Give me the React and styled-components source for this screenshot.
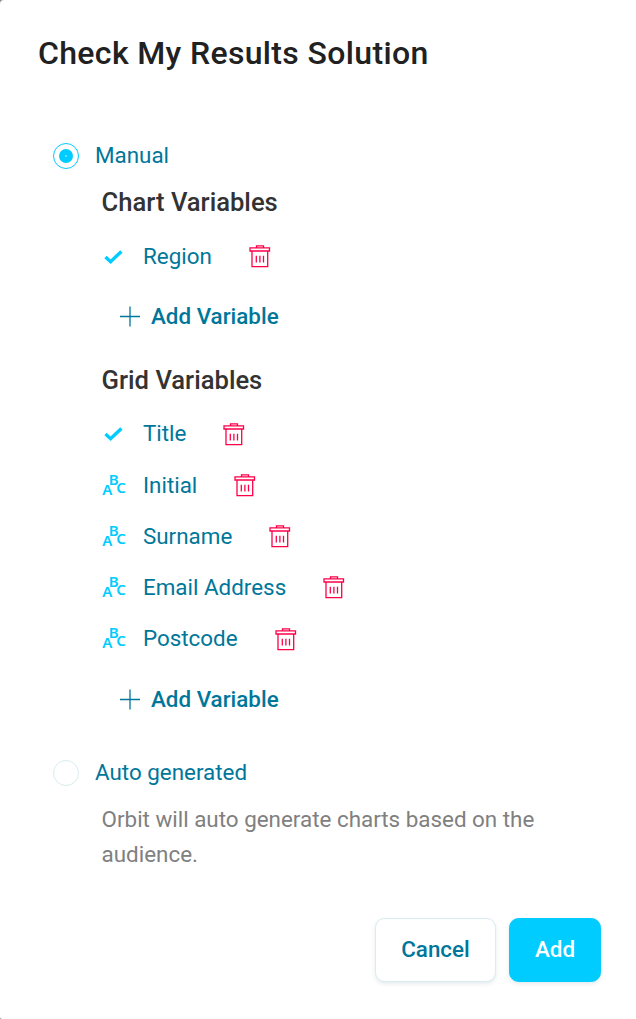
import React from "react";
import styled, { createGlobalStyle } from "styled-components";

const GlobalStyle = createGlobalStyle`
  *, *::before, *::after { box-sizing: border-box; }
  html { background: #8a8a8a; }
  body { margin: 0; }
  button { font: inherit; letter-spacing: inherit; cursor: pointer; }
`;

const Dialog = styled.main`
  width: 100%;
  height: 1019px;
  padding: 34px 35px 0 38px;
  background: #fff;
  border-radius: 4px 0 0 2px;
  font-family: Roboto, "Liberation Sans", sans-serif;
  font-size: 22.4px;
  color: #00779a;
`;

const Title = styled.h1`
  margin: 0 0 63.1px;
  font-size: 32px;
  line-height: 39px;
  font-weight: 500;
  letter-spacing: 0.35px;
  color: #212121;
`;

const Option = styled.label`
  display: flex;
  align-items: center;
  gap: 16px;
  height: 40px;
  padding-left: 15px;
  line-height: 26px;
`;

const OptionText = styled.span`
  margin-bottom: 2px;
`;

const Radio = styled.span`
  display: grid;
  place-items: center;
  width: 26px;
  height: 26px;
  border: 1px solid ${(p) => (p.$checked ? "#00ccff" : "#d9ecef")};
  border-radius: 50%;
`;

const RadioDot = styled.span`
  width: 14px;
  height: 14px;
  border-radius: 50%;
  background: radial-gradient(circle, #5ddfff 0 1px, #00ccff 1.5px);
`;

const Section = styled.section`
  padding-left: 63.6px;
  margin-bottom: ${(p) => p.$gap}px;
`;

const Heading = styled.h2`
  margin: 0 0 2.05px;
  font-size: 25.6px;
  line-height: 52px;
  font-weight: 500;
  color: #333;
`;

const VariableRow = styled.div`
  display: flex;
  align-items: center;
  height: 51.2px;
`;

const Kind = styled.span`
  display: flex;
  flex: none;
  width: 41.4px;
`;

const IconButton = styled.button`
  display: flex;
  margin-left: 35px;
  padding: 1px 0 0;
  border: 0;
  background: none;
`;

const AddVariable = styled.button`
  display: flex;
  align-items: center;
  gap: 10px;
  height: 68.6px;
  padding: 1.5px 0 0 17.4px;
  border: 0;
  background: none;
  color: #00779a;
  && { font-weight: 500; }
`;

const Description = styled.p`
  width: 510px;
  margin: 9px 0 46.4px;
  padding-left: 63.6px;
  line-height: 35px;
  color: #808080;
`;

const Actions = styled.footer`
  display: flex;
  justify-content: flex-end;
  gap: 13px;
`;

const Button = styled.button`
  width: ${(p) => (p.$primary ? 92 : 121)}px;
  height: 64px;
  padding: 0 0 2px;
  border: 1px solid ${(p) => (p.$primary ? "#00ccff" : "#d9ecef")};
  border-radius: 9.6px;
  background: ${(p) => (p.$primary ? "#00ccff" : "#fff")};
  color: ${(p) => (p.$primary ? "#fff" : "#00779a")};
  box-shadow: 0 2px 4px rgba(0, 60, 90, 0.1);
  && { font-weight: 500; }
`;

const Check = () => (
  <svg width="24" height="26" viewBox="0 0 24 26" fill="none">
    <path d="M3.5 14.1 8.6 18.7 19.4 8.4" stroke="#00ccff" strokeWidth="3.4" />
  </svg>
);

const LetterIcon = styled.svg`
  overflow: visible;
  fill: #00ccff;
  font: 600 15px "Noto Sans", sans-serif;
`;

const Abc = () => (
  <LetterIcon width="26" height="26" viewBox="0 0 26 26">
    <text x="0.2" y="23">A</text>
    <text x="6.8" y="12.9">B</text>
    <text x="14.2" y="21.1">C</text>
  </LetterIcon>
);

const Trash = () => (
  <svg width="24" height="26" viewBox="0 0 24 26" fill="none" stroke="#ff0048" strokeWidth="1.3">
    <path d="M9.5 4.8V2.8H16.5V4.8M3 4.8H22.5V8H3ZM5 8V23.7H20.7V8" />
    <path d="M9.3 12.7V19.6M12.9 12.7V19.6M16.5 12.7V19.6" />
  </svg>
);

const Plus = () => (
  <svg width="22" height="22" viewBox="0 0 22 22" stroke="#00779a" strokeWidth="1.3">
    <path d="M1 11.5H21M11 1.5V21.5" />
  </svg>
);

const Variable = ({ name, kind }) => (
  <VariableRow>
    <Kind>{kind === "text" ? <Abc /> : <Check />}</Kind>
    {name}
    <IconButton aria-label={`Remove ${name}`}>
      <Trash />
    </IconButton>
  </VariableRow>
);

const VariableSection = ({ title, variables, gap }) => (
  <Section $gap={gap}>
    <Heading>{title}</Heading>
    {variables.map((v) => (
      <Variable key={v.name} {...v} />
    ))}
    <AddVariable>
      <Plus />
      Add Variable
    </AddVariable>
  </Section>
);

const chartVariables = [{ name: "Region", kind: "selector" }];
const gridVariables = [
  { name: "Title", kind: "selector" },
  { name: "Initial", kind: "text" },
  { name: "Surname", kind: "text" },
  { name: "Email Address", kind: "text" },
  { name: "Postcode", kind: "text" },
];

export default function App() {
  return (
    <>
      <GlobalStyle />
      <Dialog>
        <Title>Check My Results Solution</Title>
        <Option>
          <Radio $checked>
            <RadioDot />
          </Radio>
          <OptionText>Manual</OptionText>
        </Option>
        <VariableSection title="Chart Variables" variables={chartVariables} gap={3.85} />
        <VariableSection title="Grid Variables" variables={gridVariables} gap={20.4} />
        <Option>
          <Radio />
          <OptionText>Auto generated</OptionText>
        </Option>
        <Description>Orbit will auto generate charts based on the audience.</Description>
        <Actions>
          <Button>Cancel</Button>
          <Button $primary>Add</Button>
        </Actions>
      </Dialog>
    </>
  );
}
